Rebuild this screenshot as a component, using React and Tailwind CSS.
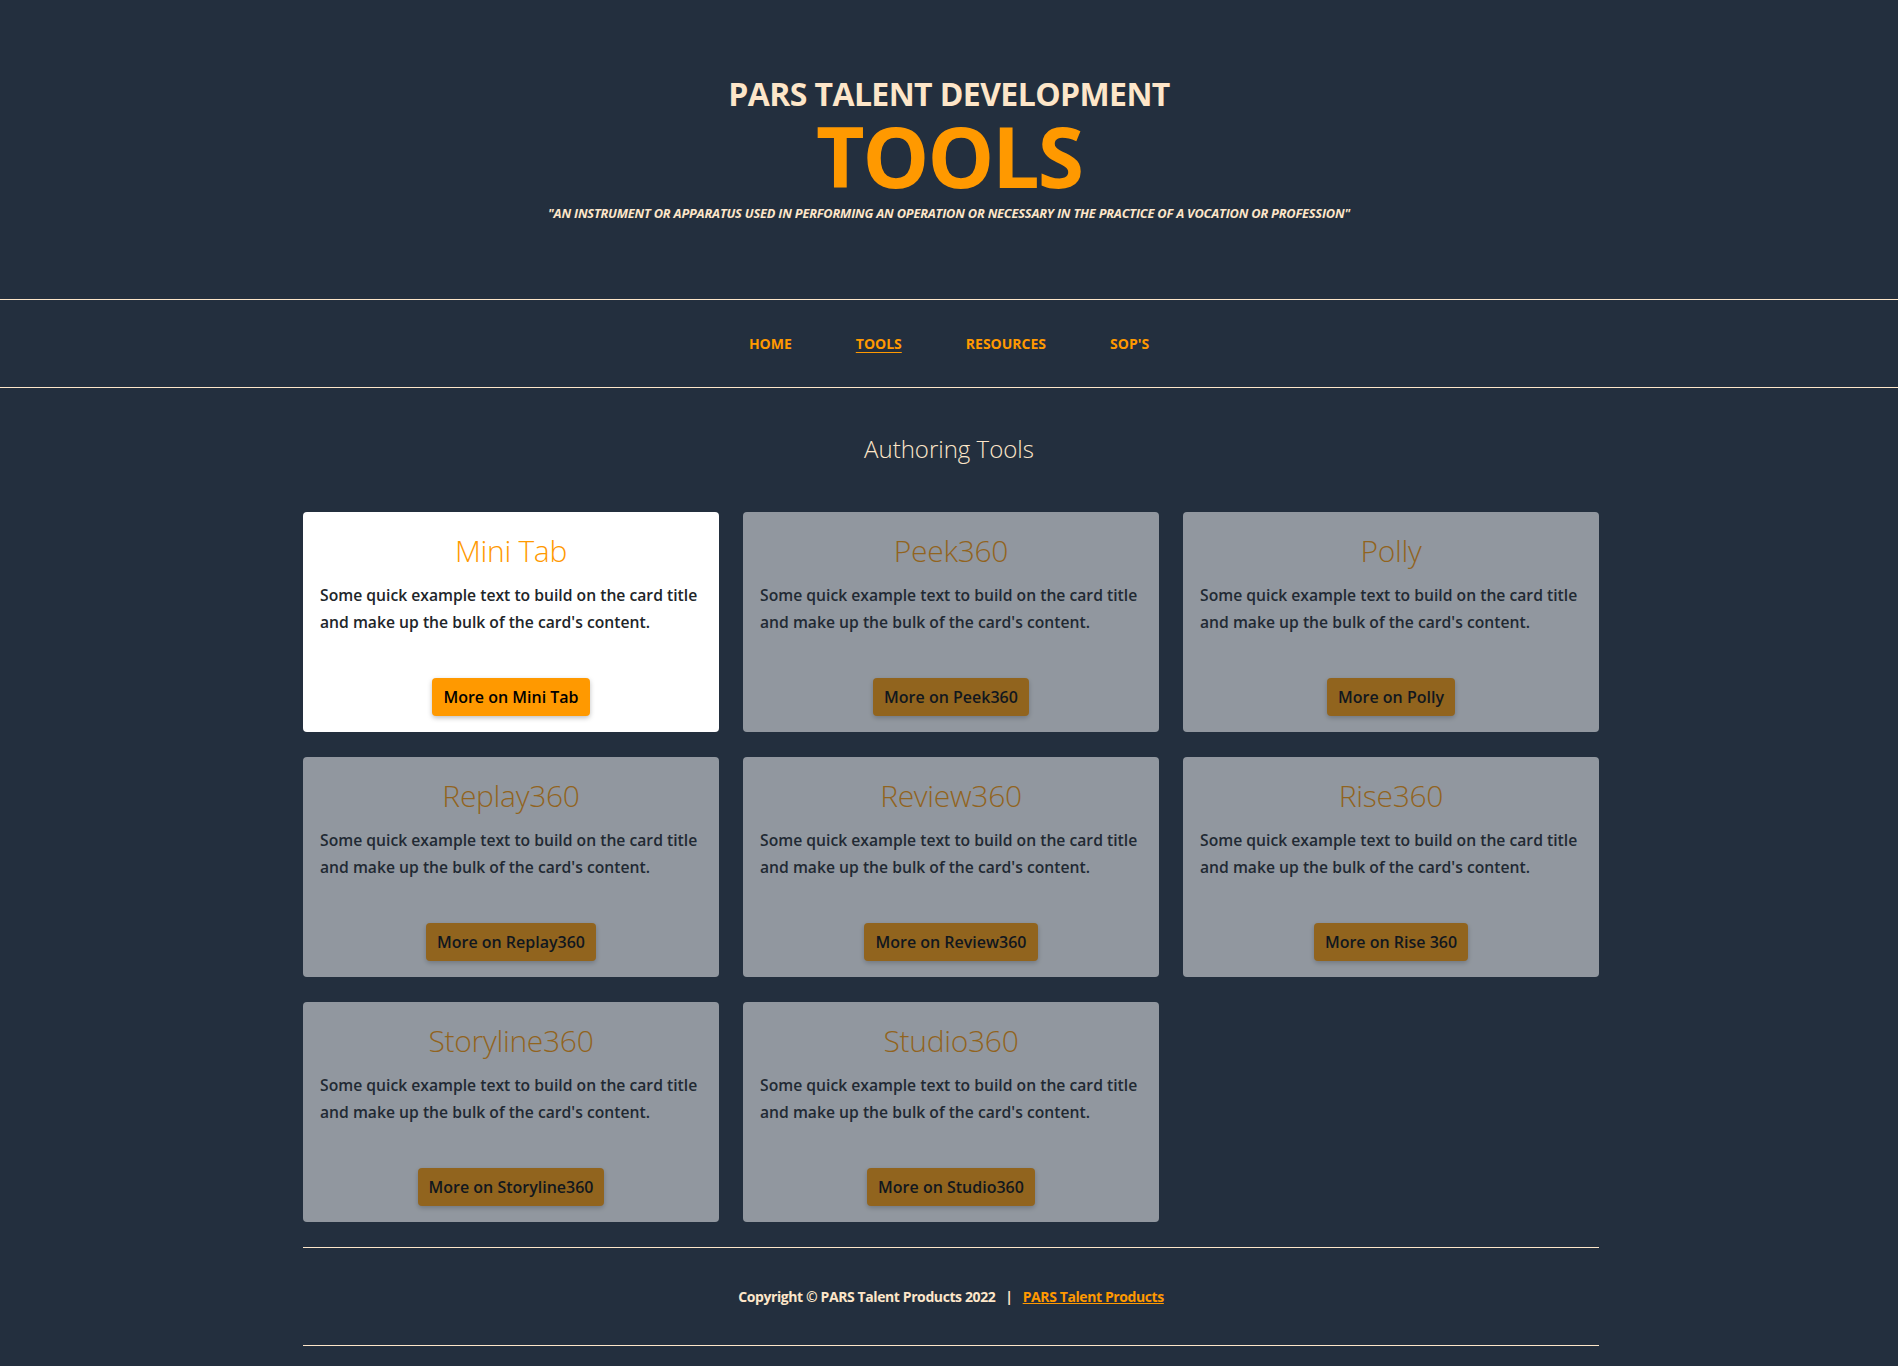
import React from "react";

const cards = [
  { title: "Mini Tab", btn: "More on Mini Tab", active: true },
  { title: "Peek360", btn: "More on Peek360" },
  { title: "Polly", btn: "More on Polly" },
  { title: "Replay360", btn: "More on Replay360" },
  { title: "Review360", btn: "More on Review360" },
  { title: "Rise360", btn: "More on Rise 360" },
  { title: "Storyline360", btn: "More on Storyline360" },
  { title: "Studio360", btn: "More on Studio360" },
];

function Card({ title, btn, active }) {
  return (
    <div
      className={
        "h-[220px] bg-white rounded-[4px] px-[17px] pt-[21px] pb-4 flex flex-col items-center " +
        (active ? "" : "opacity-50")
      }
    >
      <h5 className="text-[30px] leading-[36px] font-light tracking-[-0.3px] text-[#ff9900] text-center">{title}</h5>
      <p className="mt-[13px] w-full text-[15.7px] leading-[27px] font-semibold text-[#212529]">
        Some quick example text to build on the card title and make up the bulk of the card's content.
      </p>
      <button className="mt-auto h-[38px] px-[11px] rounded-[4px] bg-[#ff9900] text-black text-[16px] font-semibold shadow-[0_2px_5px_rgba(0,0,0,0.25)]">
        {btn}
      </button>
    </div>
  );
}

export default function App() {
  return (
    <div
      className="min-h-[1366px] bg-[#232f3e] text-[#ffe4c4]"
      style={{ fontFamily: '"Open Sans", "Noto Sans", sans-serif' }}
    >
      <header className="pt-[74px] flex flex-col items-center">
        <h2 className="text-[32px] leading-[40px] font-bold tracking-[-0.6px] text-[#fde6c9]">
          PARS TALENT DEVELOPMENT
        </h2>
        <h1 className="mt-[6px] text-[84px] leading-[72px] font-bold tracking-[-2px] text-[#ff9900]">TOOLS</h1>
        <p className="mt-[13px] text-[12.8px] leading-[16px] font-bold italic tracking-[-0.2px] text-[#fde6c9]">
          "AN INSTRUMENT OR APPARATUS USED IN PERFORMING AN OPERATION OR NECESSARY IN THE PRACTICE OF A VOCATION OR PROFESSION"
        </p>
      </header>

      <nav className="mt-[78px] h-[89px] border-y border-[#fde6c9] flex items-center justify-center">
        <ul className="flex items-center gap-[64px] text-[14px] font-bold text-[#ff9900]">
          <li>HOME</li>
          <li className="underline underline-offset-[3px]">TOOLS</li>
          <li>RESOURCES</li>
          <li>SOP'S</li>
        </ul>
      </nav>

      <h3 className="mt-[45px] text-center text-[24px] leading-[32px] font-light text-[#fde6c9]">
        Authoring Tools
      </h3>

      <div className="pl-[4px]">
        <main className="mx-auto w-[1296px] mt-[47px]">
          <div className="grid grid-cols-3 gap-x-[24px] gap-y-[25px]">
            {cards.map((c) => (
              <Card key={c.title} {...c} />
            ))}
          </div>

          <footer className="mt-[25px] border-y border-[#fde6c9] h-[99px] flex items-center justify-center text-[14px] font-bold tracking-[-0.4px] text-[#fde6c9]">
            <span>Copyright © PARS Talent Products 2022</span>
            <span className="mx-[10px]">|</span>
            <a className="text-[#ff9900] underline">PARS Talent Products</a>
          </footer>
        </main>
      </div>
    </div>
  );
}
